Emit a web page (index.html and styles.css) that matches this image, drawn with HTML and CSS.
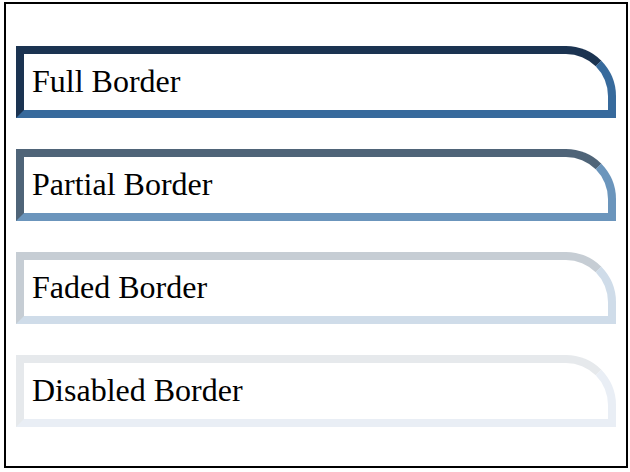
FILE: index.html
```html
<!DOCTYPE html>
<html>
<head>
<meta charset="utf-8">
<link rel="stylesheet" href="styles.css">
</head>
<body>
<div class="frame">
  <div class="box full">Full Border</div>
  <div class="box partial">Partial Border</div>
  <div class="box faded">Faded Border</div>
  <div class="box disabled">Disabled Border</div>
</div>
</body>
</html>
```
FILE: styles.css
```css
html, body {
  margin: 0;
  padding: 0;
  background: #fff;
}
body {
  font-family: "Liberation Serif", "Times New Roman", serif;
  color: #000;
}
.frame {
  box-sizing: border-box;
  width: 624px;
  height: 466px;
  margin: 2px 0 0 4px;
  border: 2px solid #000;
  padding: 42px 10px 0 10px;
  display: flex;
  flex-direction: column;
  gap: 31px;
}
.box {
  border: 8px solid;
  border-top-right-radius: 50px;
  padding: 9px 9px 10px 8px;
  font-size: 32px;
  line-height: 37px;
  height: 37px;
}
.full {
  border-top-color: #1b3351;
  border-left-color: #1b3351;
  border-right-color: #376a9c;
  border-bottom-color: #376a9c;
}
.partial {
  border-top-color: #4f6478;
  border-left-color: #4f6478;
  border-right-color: #6b95bc;
  border-bottom-color: #6b95bc;
}
.faded {
  border-top-color: #c6cdd4;
  border-left-color: #c6cdd4;
  border-right-color: #cfdce9;
  border-bottom-color: #cfdce9;
}
.disabled {
  border-top-color: #e6e9ec;
  border-left-color: #e6e9ec;
  border-right-color: #e9eef5;
  border-bottom-color: #e9eef5;
}
```
